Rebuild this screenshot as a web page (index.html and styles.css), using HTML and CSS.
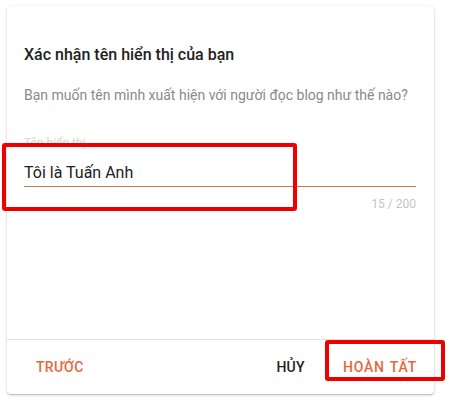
FILE: index.html
```html
<!DOCTYPE html>
<html lang="vi">
<head>
<meta charset="utf-8">
<link rel="stylesheet" href="styles.css">
</head>
<body>
<div class="card">
  <div class="card-body">
    <h1 class="title">Xác nhận tên hiển thị của bạn</h1>
    <p class="subtitle">Bạn muốn tên mình xuất hiện với người đọc blog như thế nào?</p>
    <div class="field">
      <div class="field-label">Tên hiển thị</div>
      <div class="field-input">Tôi là Tuấn Anh</div>
      <div class="field-counter">15 / 200</div>
    </div>
  </div>
  <div class="card-footer">
    <span class="btn btn-accent">Trước</span>
    <span class="spacer"></span>
    <span class="btn btn-plain">Hủy</span>
    <span class="btn btn-accent btn-done">Hoàn tất</span>
  </div>
</div>
<div class="mark mark-field"></div>
<div class="mark mark-done"></div>
</body>
</html>
```

FILE: styles.css
```css
html, body {
  margin: 0;
  padding: 0;
  background: #ffffff;
}
body {
  width: 455px;
  height: 412px;
  position: relative;
  font-family: Roboto, "Noto Sans", "Liberation Sans", sans-serif;
  overflow: hidden;
}
.card {
  margin: 6px 0 0 7px;
  width: 427px;
  height: 388px;
  background: #fff;
  border-radius: 4px;
  box-shadow: 0 1px 3px rgba(0,0,0,0.22), 0 1px 1px rgba(0,0,0,0.1);
  display: flex;
  flex-direction: column;
  box-sizing: border-box;
}
.card-body {
  flex: 1;
  padding: 37px 18px 0 17px;
}
.title {
  margin: 0 0 18px;
  font-size: 16px;
  line-height: 24px;
  font-weight: 500;
  color: #212121;
}
.subtitle {
  margin: 0;
  font-size: 14px;
  line-height: 20px;
  color: #8a8a8a;
}
.field {
  margin-top: 30px;
}
.field-label {
  font-size: 12px;
  line-height: 16px;
  color: #d6d6d6;
}
.field-input {
  margin-top: 10px;
  font-size: 16px;
  line-height: 24px;
  color: #212121;
  border-bottom: 1px solid #c97a50;
  padding-bottom: 1px;
}
.field-counter {
  margin-top: 9px;
  text-align: right;
  font-size: 12px;
  line-height: 16px;
  color: #c4c4c4;
}
.card-footer {
  height: 54px;
  border-top: 1px solid #e0e0e0;
  display: flex;
  align-items: center;
  padding: 0 17px 0 29px;
}
.spacer {
  flex: 1;
}
.btn {
  font-size: 14px;
  line-height: 20px;
  font-weight: 500;
  letter-spacing: 0.3px;
  text-transform: uppercase;
}
.btn-accent {
  color: #e8673a;
}
.btn-plain {
  color: #212121;
}
.btn-done {
  margin-left: 38px;
  letter-spacing: 0.8px;
  word-spacing: 1px;
}
.mark {
  position: absolute;
  border: 4px solid #ee0000;
  border-radius: 3px;
  box-sizing: border-box;
}
.mark-field {
  left: 2px;
  top: 143px;
  width: 295px;
  height: 68px;
}
.mark-done {
  left: 325px;
  top: 340px;
  width: 120px;
  height: 41px;
}
```
